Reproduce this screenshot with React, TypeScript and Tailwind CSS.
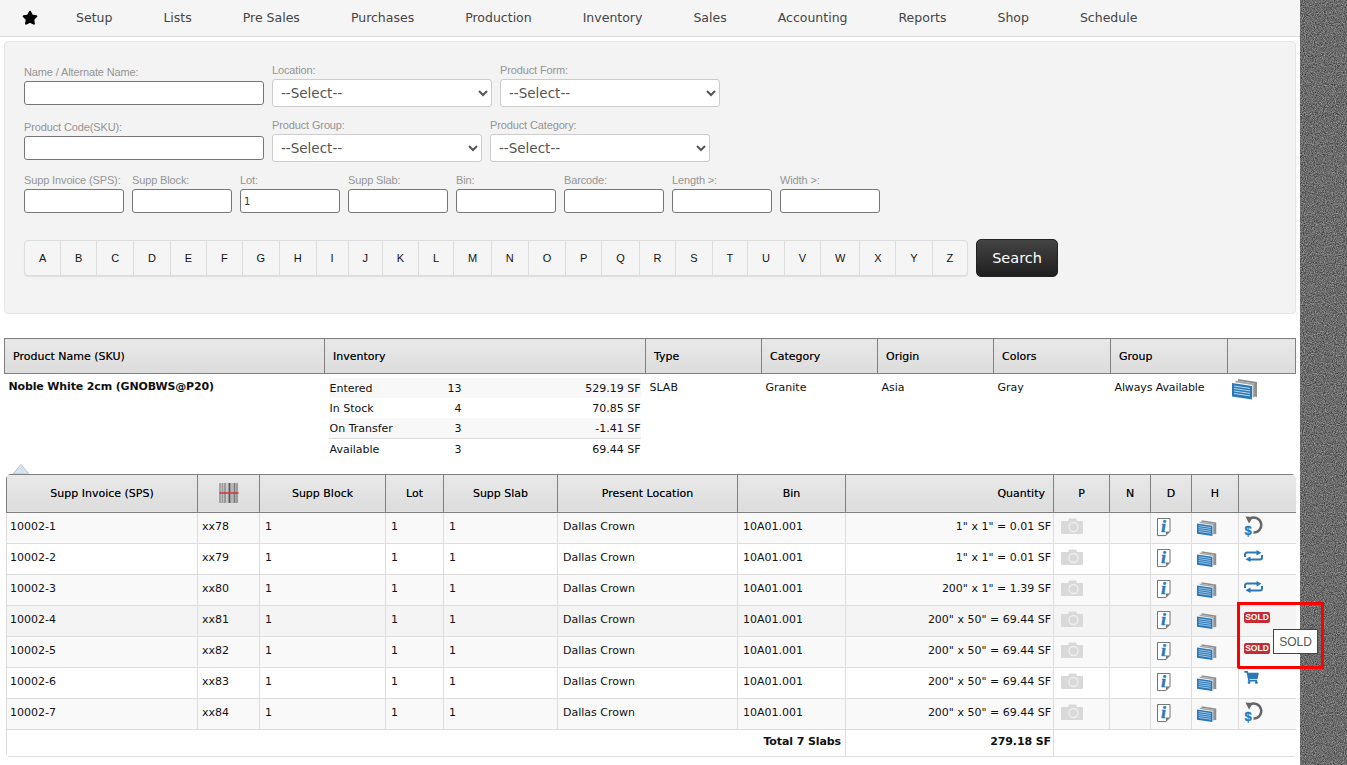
import { Star } from 'lucide-react';
import { FaShoppingCart } from 'react-icons/fa';

const navItems = ['Setup', 'Lists', 'Pre Sales', 'Purchases', 'Production', 'Inventory', 'Sales', 'Accounting', 'Reports', 'Shop', 'Schedule'];
const letters = 'ABCDEFGHIJKLMNOPQRSTUVWXYZ'.split('');
const smallFields = ['Supp Invoice (SPS):', 'Supp Block:', 'Lot:', 'Supp Slab:', 'Bin:', 'Barcode:', 'Length >:', 'Width >:'];

const inventory = [
  { label: 'Entered', count: '13', qty: '529.19 SF', cls: 'h-5 pt-[2px] bg-[#f8f8f8]' },
  { label: 'In Stock', count: '4', qty: '70.85 SF', cls: 'h-5 pt-[2px]' },
  { label: 'On Transfer', count: '3', qty: '-1.41 SF', cls: 'h-[21px] pt-[2px] bg-[#f8f8f8] border-b border-[#ddd]' },
  { label: 'Available', count: '3', qty: '69.44 SF', cls: 'h-5 pt-[2px]' },
];

const slabs = [
  { id: '10002-1', code: 'xx78', qty: '1" x 1" = 0.01 SF', action: 'refund', bg: 'bg-[#f9f9f9]' },
  { id: '10002-2', code: 'xx79', qty: '1" x 1" = 0.01 SF', action: 'transfer', bg: 'bg-white' },
  { id: '10002-3', code: 'xx80', qty: '200" x 1" = 1.39 SF', action: 'transfer', bg: 'bg-[#f9f9f9]' },
  { id: '10002-4', code: 'xx81', qty: '200" x 50" = 69.44 SF', action: 'sold', bg: 'bg-[#f4f4f4]' },
  { id: '10002-5', code: 'xx82', qty: '200" x 50" = 69.44 SF', action: 'sold', bg: 'bg-[#f9f9f9]' },
  { id: '10002-6', code: 'xx83', qty: '200" x 50" = 69.44 SF', action: 'cart', bg: 'bg-white' },
  { id: '10002-7', code: 'xx84', qty: '200" x 50" = 69.44 SF', action: 'refund', bg: 'bg-[#f9f9f9]' },
];

const headCell = 'border border-[#808080] bg-linear-to-b from-[#e9e9e9] to-[#dcdcdc] font-normal text-black [text-shadow:0_0_0.3px_rgba(0,0,0,0.5)]';
const cell = 'border border-[#ddd] px-[5px] align-middle';

function Label({ children }: { children: string }) {
  return <label className="block h-3 mb-[3px] text-[11px] leading-3 tracking-[-0.13px] text-[#949494] font-['Liberation_Sans',sans-serif]">{children}</label>;
}

function TextField({ label, width, value }: { label: string; width: string; value?: string }) {
  return (
    <div className={width}>
      <Label>{label}</Label>
      <input
        readOnly
        value={value ?? ''}
        className="block w-full h-6 px-[3px] bg-white border border-[#767676] rounded-[3px] text-[10px] text-[#333]"
      />
    </div>
  );
}

function SelectField({ label, width }: { label: string; width: string }) {
  return (
    <div className={width}>
      <Label>{label}</Label>
      <select className="block w-full h-7 pl-1 bg-white border border-[#ccc] rounded-[3px] text-[13.5px] text-[#555]">
        <option>--Select--</option>
      </select>
    </div>
  );
}

function CameraIcon() {
  return (
    <svg width="22" height="16" viewBox="0 0 22 16" className="block mb-[4px]">
      <path d="M1 3h6l1-2.500h7L16 3h5a1 1 0 0 1 1 1v11a1 1 0 0 1-1 1H1a1 1 0 0 1-1-1V4a1 1 0 0 1 1-1z" fill="#d9d9d9" />
      <circle cx="12.500" cy="9" r="4.500" fill="none" stroke="#eeeeee" strokeWidth="1.300" />
    </svg>
  );
}

function InfoIcon() {
  return (
    <svg width="14" height="18.500" viewBox="0 0 15 20" className="block">
      <path d="M.5.5h13.500v14l-4.500 4.500H.5z" fill="#fff" stroke="#666" />
      <path d="M14 14.500h-4.500V19z" fill="#777" />
      <text x="7" y="15" textAnchor="middle" fontFamily="Liberation Serif, serif" fontWeight="700" fontStyle="italic" fontSize="18" fill="#2a78b8" stroke="#2a78b8" strokeWidth="0.700">i</text>
    </svg>
  );
}

function StackIcon({ small }: { small?: boolean }) {
  return (
    <svg width={small ? 20 : 26} height={small ? 18 : 22} viewBox="0 0 26 22" className="block">
      <path d="M6 1l19 3v15l-3-.4V5.500L6 3z" fill="#8e8e8e" />
      <path d="M3.500 2.500l19 3v14l-2-.3V7L3.500 4.500z" fill="#a8a8a8" />
      <path d="M0 5l20 3v13.500L0 18.500z" fill="#2a78b8" />
      <path d="M2 8l16 2.400M2 10.500l16 2.400M2 13l16 2.400M2 15.500l16 2.400" stroke="#bcd8ee" strokeWidth="1" />
    </svg>
  );
}

function RefundIcon() {
  return (
    <svg width="19" height="22" viewBox="0 0 19 22" className="block mb-[3px]">
      <path d="M6 3.500a7.500 7.500 0 1 1 3.500 14" fill="none" stroke="#666" strokeWidth="2.500" />
      <path d="M1.500 1.500l7.500 .5-4 6.500z" fill="#666" />
      <text x="4" y="19.500" textAnchor="middle" fontFamily="Liberation Sans, sans-serif" fontWeight="700" fontSize="13" fill="#2a78b8" stroke="#2a78b8" strokeWidth="0.300">$</text>
    </svg>
  );
}

function TransferIcon() {
  return (
    <svg width="19" height="12" viewBox="0 0 19 12" className="block mb-[6px]">
      <path d="M1 7V4.500a2 2 0 0 1 2-2h10M18 5v2.500a2 2 0 0 1-2 2H6" fill="none" stroke="#2a78b8" strokeWidth="2" />
      <path d="M12.500 0l5 2.700-5 2.700zM6.500 6.600l-5 2.700 5 2.700z" fill="#2a78b8" />
    </svg>
  );
}

function SoldBadge() {
  return (
    <span className="block w-[26px] h-[11px] mb-[7px] rounded-[2px] bg-[#c62a35] text-white text-[8.5px] leading-[11px] font-bold text-center font-['Liberation_Sans',sans-serif]">
      SOLD
    </span>
  );
}

function Action({ kind }: { kind: string }) {
  if (kind === 'refund') return <RefundIcon />;
  if (kind === 'transfer') return <TransferIcon />;
  if (kind === 'sold') return <SoldBadge />;
  return <FaShoppingCart className="block mb-[10px] text-[#2a78b8] w-[15px] h-[13px]" />;
}

function BarcodeIcon() {
  const bars = [
    [0, 1, '#666'], [2, 2, '#999'], [5, 1, '#555'], [7, 1, '#aaa'], [9, 2, '#555'], [12, 1, '#888'], [14, 2, '#777'], [17, 1, '#555'],
  ] as const;
  return (
    <svg width="20" height="20" viewBox="0 0 19 20" className="block mx-auto">
      {bars.map(([x, w, c]) => (
        <rect key={x} x={x} y="0" width={w} height="20" fill={c} />
      ))}
      <path d="M0 10h19" stroke="#d9303a" strokeWidth="1.300" />
    </svg>
  );
}

export default function App() {
  return (
    <div className="relative flex w-[1347px] h-[765px] overflow-hidden bg-white text-[11px] text-[#111] font-['DejaVu_Sans',sans-serif]">
      <div className="w-[1300px] shrink-0">
        {/* top nav */}
        <nav className="flex items-center h-[37px] pl-[22px] gap-[51px] bg-[#f5f5f5] border-b border-[#ddd] text-[12.5px] text-[#444]">
          <Star className="w-4 h-4 mr-[-13px] fill-black text-black" />
          {navItems.map((item) => (
            <span key={item}>{item}</span>
          ))}
        </nav>

        <div className="px-[4px] pt-[4px]">
          {/* search panel */}
          <div className="h-[273px] pt-[22px] px-[19px] bg-[#f3f3f3] border border-[#e6e6e6] rounded-[4px]">
            <div className="flex items-center gap-2">
              <TextField label="Name / Alternate Name:" width="w-[240px]" />
              <SelectField label="Location:" width="w-[220px]" />
              <SelectField label="Product Form:" width="w-[220px]" />
            </div>
            <div className="flex items-center gap-2 mt-3">
              <TextField label="Product Code(SKU):" width="w-[240px]" />
              <SelectField label="Product Group:" width="w-[210px]" />
              <SelectField label="Product Category:" width="w-[220px]" />
            </div>
            <div className="flex gap-2 mt-3">
              {smallFields.map((f) => (
                <TextField key={f} label={f} width="w-[100px]" value={f === 'Lot:' ? '1' : undefined} />
              ))}
            </div>
            <div className="flex items-center gap-2 mt-[26px]">
              <div className="flex h-9 bg-[#f5f5f5] border border-[#ddd] rounded-[4px] shadow-[0_1px_1px_rgba(0,0,0,0.08)] text-[11px] font-['Liberation_Sans',sans-serif] text-[#111]">
                {letters.map((l) => (
                  <span key={l} className="flex items-center px-[13.92px] border-r border-[#ddd] last:border-r-0">{l}</span>
                ))}
              </div>
              <button className="w-[82px] h-[38px] pt-[1px] rounded-[5px] border border-[#222] bg-linear-to-b from-[#444] to-[#1f1f1f] text-white text-[14.5px]">
                Search
              </button>
            </div>
          </div>

          {/* product table */}
          <table className="mt-[24px] w-[1291px] table-fixed border-collapse">
            <colgroup>
              <col className="w-[320px]" />
              <col className="w-[321px]" />
              <col className="w-[116px]" />
              <col className="w-[116px]" />
              <col className="w-[116px]" />
              <col className="w-[117px]" />
              <col className="w-[117px]" />
              <col className="w-[68px]" />
            </colgroup>
            <thead>
              <tr className="h-[35px] text-left">
                {['Product Name (SKU)', 'Inventory', 'Type', 'Category', 'Origin', 'Colors', 'Group', ''].map((h, i) => (
                  <th key={i} className={`${headCell} px-2 pt-[2px]`}>{h}</th>
                ))}
              </tr>
            </thead>
            <tbody>
              <tr className="align-top h-[90px]">
                <td className="pl-[4px] pt-[5px] font-bold tracking-[-0.14px]">Noble White 2cm (GNOBWS@P20)</td>
                <td className="pl-[4px] pr-[5px] pt-[4px]">
                  {inventory.map((row) => (
                    <div key={row.label} className={`flex items-center pl-[1px] ${row.cls}`}>
                      <span className="w-[100px]">{row.label}</span>
                      <span className="w-[32px] text-right">{row.count}</span>
                      <span className="flex-1 text-right">{row.qty}</span>
                    </div>
                  ))}
                </td>
                <td className="pl-[4px] pt-[6px]">SLAB</td>
                <td className="pl-[4px] pt-[6px]">Granite</td>
                <td className="pl-[4px] pt-[6px]">Asia</td>
                <td className="pl-[4px] pt-[6px]">Gray</td>
                <td className="pl-[4px] pt-[6px] tracking-[-0.12px]">Always Available</td>
                <td className="pl-[4px] pt-[4px]"><StackIcon /></td>
              </tr>
            </tbody>
          </table>

          {/* pointer into the slab table */}
          <svg width="16" height="10" viewBox="0 0 16 10" className="block ml-[9px]">
            <path d="M0 10L8 .5 16 10z" fill="#d5e3f1" stroke="#b4c6d8" />
          </svg>

          {/* slab table */}
          <div className="ml-[2px] w-[1290px] overflow-hidden rounded-t-[5px] rounded-b-[4px]">
            <table className="w-full table-fixed border-collapse">
              <colgroup>
                <col className="w-[191px]" />
                <col className="w-[62px]" />
                <col className="w-[126px]" />
                <col className="w-[58px]" />
                <col className="w-[114px]" />
                <col className="w-[180px]" />
                <col className="w-[108px]" />
                <col className="w-[208px]" />
                <col className="w-[56px]" />
                <col className="w-[41px]" />
                <col className="w-[41px]" />
                <col className="w-[47px]" />
                <col className="w-[58px]" />
              </colgroup>
              <thead>
                <tr className="h-[38px] text-center">
                  <th className={`${headCell} pt-[3px]`}>Supp Invoice (SPS)</th>
                  <th className={headCell}><BarcodeIcon /></th>
                  <th className={`${headCell} pt-[3px]`}>Supp Block</th>
                  <th className={`${headCell} pt-[3px]`}>Lot</th>
                  <th className={`${headCell} pt-[3px]`}>Supp Slab</th>
                  <th className={`${headCell} pt-[3px]`}>Present Location</th>
                  <th className={`${headCell} pt-[3px]`}>Bin</th>
                  <th className={`${headCell} pt-[3px] text-right pr-2`}>Quantity</th>
                  <th className={`${headCell} pt-[3px]`}>P</th>
                  <th className={`${headCell} pt-[3px]`}>N</th>
                  <th className={`${headCell} pt-[3px]`}>D</th>
                  <th className={`${headCell} pt-[3px]`}>H</th>
                  <th className={headCell}></th>
                </tr>
              </thead>
              <tbody>
                {slabs.map((s) => (
                  <tr key={s.id} className={`h-[31px] ${s.bg}`}>
                    <td className={`${cell} pl-[3px]`}>{s.id}</td>
                    <td className={`${cell} pl-[4px]`}>{s.code}</td>
                    <td className={cell}>1</td>
                    <td className={cell}>1</td>
                    <td className={cell}>1</td>
                    <td className={cell}>Dallas Crown</td>
                    <td className={cell}>10A01.001</td>
                    <td className={`${cell} text-right pr-[2px]`}>{s.qty}</td>
                    <td className={`${cell} pl-[7px]`}><CameraIcon /></td>
                    <td className={cell}></td>
                    <td className={`${cell} pl-[6px]`}><InfoIcon /></td>
                    <td className={`${cell} pl-[5px]`}><StackIcon small /></td>
                    <td className={`${cell} pr-0`}><Action kind={s.action} /></td>
                  </tr>
                ))}
                <tr className="h-[27px] font-bold tracking-[-0.1px]">
                  <td colSpan={7} className={`${cell} text-right pr-[4px]`}>Total 7 Slabs</td>
                  <td className={`${cell} text-right pr-[2px]`}>279.18 SF</td>
                  <td colSpan={5} className={cell}></td>
                </tr>
              </tbody>
            </table>
          </div>
        </div>
      </div>

      {/* textured page background */}
      <div className="flex-1 bg-[#6b6b6b]">
        <svg width="47" height="765" className="block">
          <filter id="grain" colorInterpolationFilters="sRGB">
            <feTurbulence type="fractalNoise" baseFrequency="0.9" numOctaves="2" />
            <feColorMatrix values="0.6 0 0 0 0.12 0.6 0 0 0 0.12 0.6 0 0 0 0.12 0 0 0 0 1" />
          </filter>
          <rect width="47" height="765" filter="url(#grain)" />
        </svg>
      </div>

      {/* annotation box and tooltip */}
      <div className="absolute left-[1237px] top-[602px] w-[87px] h-[67px] border-[3px] border-[#ff0000] rounded-bl-[2px]" />
      <div className="absolute left-[1273px] top-[629px] w-[45px] h-[25px] flex items-center justify-center bg-white border border-[#444] text-[12px] text-[#555] font-['Liberation_Sans',sans-serif]">
        SOLD
      </div>
    </div>
  );
}
